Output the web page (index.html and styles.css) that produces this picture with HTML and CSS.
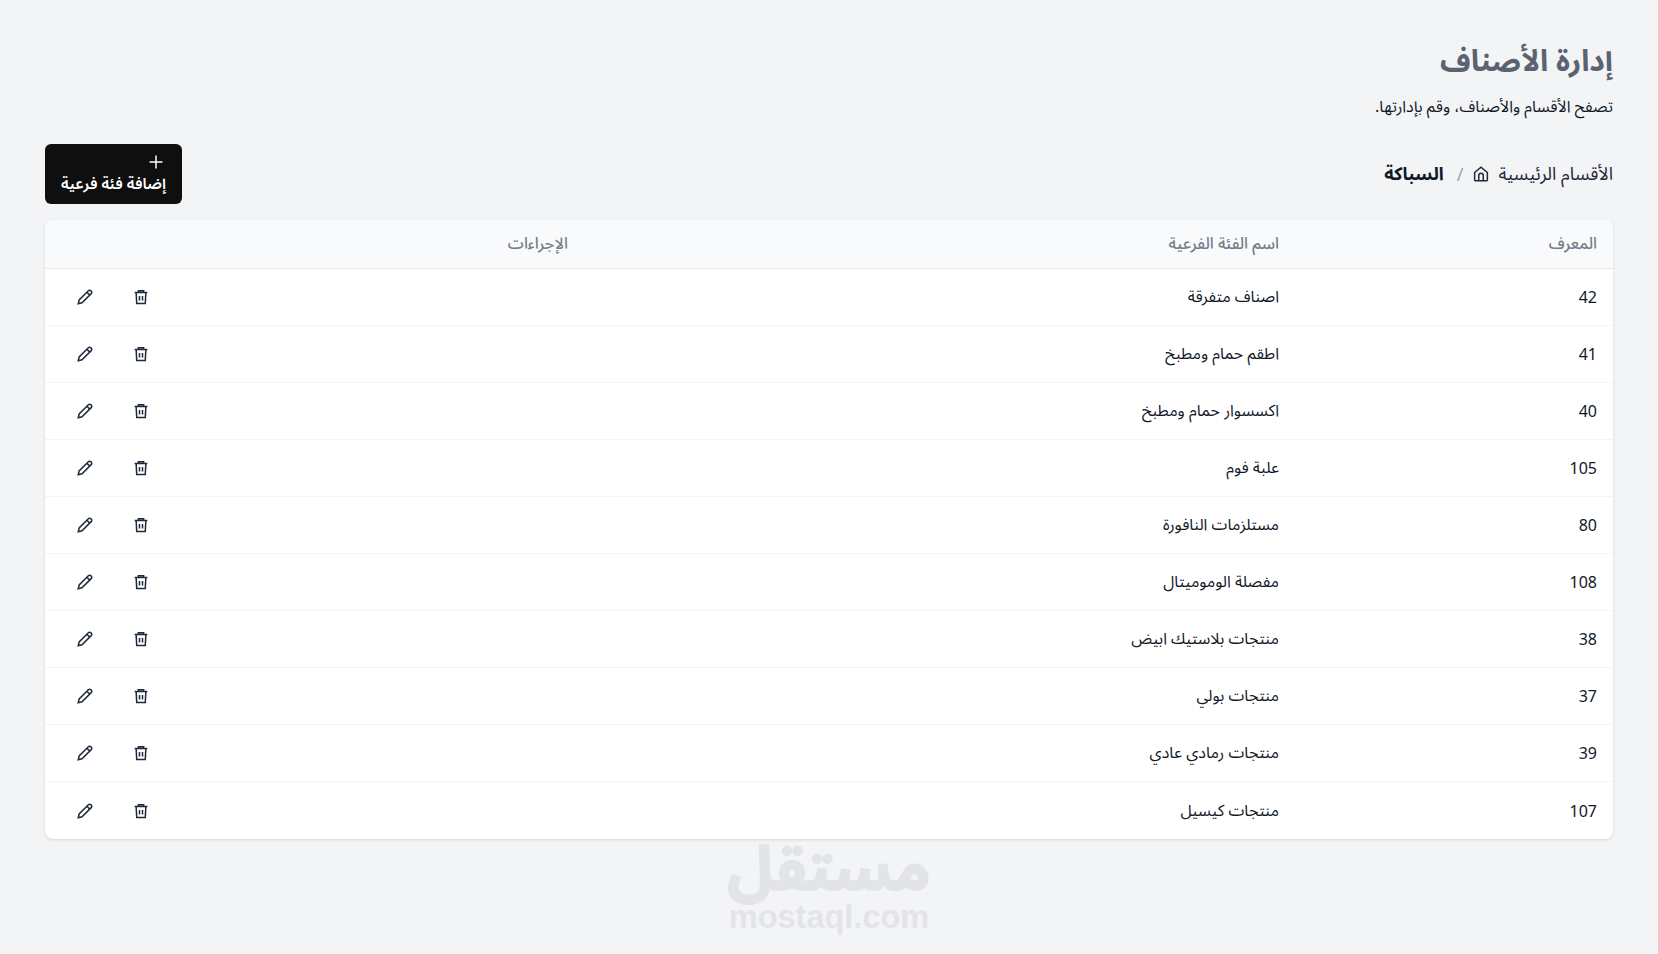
FILE: index.html
```html
<!DOCTYPE html>
<html lang="ar" dir="rtl">
<head>
<meta charset="utf-8">
<title>إدارة الأصناف</title>
<link rel="stylesheet" href="styles.css">
</head>
<body>
<main class="page">
  <header class="head">
    <h1 class="title">إدارة الأصناف</h1>
    <p class="sub">تصفح الأقسام والأصناف، وقم بإدارتها.</p>
  </header>
  <div class="bar">
    <nav class="crumbs">
      <span class="crumb">الأقسام الرئيسية</span>
      <svg class="home" viewBox="0 0 24 24"><path d="M3.500 10 12 3l8.500 7v9.500a1.500 1.500 0 0 1-1.500 1.500H5a1.500 1.500 0 0 1-1.500-1.500z"/><path d="M9 21v-7a3 3 0 0 1 6 0v7"/></svg>
      <span class="sep">/</span>
      <strong class="current">السباكة</strong>
    </nav>
    <button class="add">
      <svg class="plus" viewBox="0 0 16 16"><path d="M8 1.500v13M1.500 8h13"/></svg>
      <span class="add-label">إضافة فئة فرعية</span>
    </button>
  </div>
  <section class="card">
    <table class="table">
      <thead>
        <tr><th class="c-id">المعرف</th><th class="c-name">اسم الفئة الفرعية</th><th class="c-act">الإجراءات</th></tr>
      </thead>
      <tbody>
        <tr><td>42</td><td>اصناف متفرقة</td><td><div class="acts"><svg class="ico" viewBox="0 0 24 24"><use href="#trash"/></svg><svg class="ico" viewBox="0 0 24 24"><use href="#pencil"/></svg></div></td></tr>
        <tr><td>41</td><td>اطقم حمام ومطبخ</td><td><div class="acts"><svg class="ico" viewBox="0 0 24 24"><use href="#trash"/></svg><svg class="ico" viewBox="0 0 24 24"><use href="#pencil"/></svg></div></td></tr>
        <tr><td>40</td><td>اكسسوار حمام ومطبخ</td><td><div class="acts"><svg class="ico" viewBox="0 0 24 24"><use href="#trash"/></svg><svg class="ico" viewBox="0 0 24 24"><use href="#pencil"/></svg></div></td></tr>
        <tr><td>105</td><td>علبة فوم</td><td><div class="acts"><svg class="ico" viewBox="0 0 24 24"><use href="#trash"/></svg><svg class="ico" viewBox="0 0 24 24"><use href="#pencil"/></svg></div></td></tr>
        <tr><td>80</td><td>مستلزمات النافورة</td><td><div class="acts"><svg class="ico" viewBox="0 0 24 24"><use href="#trash"/></svg><svg class="ico" viewBox="0 0 24 24"><use href="#pencil"/></svg></div></td></tr>
        <tr><td>108</td><td>مفصلة الوموميتال</td><td><div class="acts"><svg class="ico" viewBox="0 0 24 24"><use href="#trash"/></svg><svg class="ico" viewBox="0 0 24 24"><use href="#pencil"/></svg></div></td></tr>
        <tr><td>38</td><td>منتجات بلاستيك ابيض</td><td><div class="acts"><svg class="ico" viewBox="0 0 24 24"><use href="#trash"/></svg><svg class="ico" viewBox="0 0 24 24"><use href="#pencil"/></svg></div></td></tr>
        <tr><td>37</td><td>منتجات بولي</td><td><div class="acts"><svg class="ico" viewBox="0 0 24 24"><use href="#trash"/></svg><svg class="ico" viewBox="0 0 24 24"><use href="#pencil"/></svg></div></td></tr>
        <tr><td>39</td><td>منتجات رمادي عادي</td><td><div class="acts"><svg class="ico" viewBox="0 0 24 24"><use href="#trash"/></svg><svg class="ico" viewBox="0 0 24 24"><use href="#pencil"/></svg></div></td></tr>
        <tr><td>107</td><td>منتجات كيسيل</td><td><div class="acts"><svg class="ico" viewBox="0 0 24 24"><use href="#trash"/></svg><svg class="ico" viewBox="0 0 24 24"><use href="#pencil"/></svg></div></td></tr>
      </tbody>
    </table>
  </section>
  <div class="mark" dir="ltr">
    <div class="mark-ar" dir="rtl">مستقل</div>
    <div class="mark-en">mostaql.com</div>
  </div>
</main>
<svg class="defs" aria-hidden="true">
  <symbol id="trash" viewBox="0 0 24 24"><path d="M3.500 6h17M8.500 6V3.500h7V6M5.500 6l.8 14.500h11.400L18.500 6M10 10.500v6M14 10.500v6"/></symbol>
  <symbol id="pencil" viewBox="0 0 24 24"><path d="M3 21l1.200-5L16.500 3.700a2.300 2.300 0 0 1 3.300 0l.5.5a2.300 2.300 0 0 1 0 3.300L8 19.800zM14.500 5.700l3.800 3.800"/></symbol>
</svg>
</body>
</html>
```
FILE: styles.css
```css
* { box-sizing: border-box; }
html, body { margin: 0; height: 100%; }
body {
  background: #f3f4f6;
  color: #111827;
  font-family: "Noto Sans", "Noto Sans Arabic", sans-serif;
  font-size: 16px;
  overflow: hidden;
}
.page { padding: 32px 45px 0; }
.head { height: 112px; }
.title {
  margin: 0;
  padding-top: 8px;
  color: #5b6270;
  font-size: 30px;
  font-weight: 700;
  line-height: 40px;
}
.sub { margin: 15px 0 0; font-size: 16px; line-height: 23px; color: #111827; }
.bar {
  display: flex;
  justify-content: space-between;
  align-items: center;
  height: 60px;
  margin-bottom: 16px;
}
.crumbs { display: flex; align-items: center; gap: 9px; font-size: 18px; }
.crumb { color: #1f2937; }
.home { width: 18px; height: 18px; margin-right: -1px; fill: none; stroke: #1f2937; stroke-width: 2; }
.sep { color: #9ca3af; margin-left: 4px; }
.current { font-weight: 700; color: #111827; }
.add {
  display: flex;
  flex-direction: column;
  align-items: flex-start;
  width: 137px;
  height: 60px;
  padding: 10px 16px 0;
  background: #0f0f10;
  color: #fff;
  border: 0;
  border-radius: 6px;
  font-family: "Noto Sans", "Noto Sans Arabic", sans-serif;
  font-size: 15.500px;
  font-weight: 600;
  line-height: 26px;
}
.add-label { white-space: nowrap; }
.plus { width: 16px; height: 16px; margin-right: 2px; fill: none; stroke: #fff; stroke-width: 1.500; }
.card {
  background: #fff;
  border-radius: 8px;
  overflow: hidden;
  box-shadow: 0 1px 3px rgba(0,0,0,.12);
}
.table { width: 100%; border-collapse: separate; border-spacing: 0; table-layout: fixed; }
th {
  height: 49px;
  padding: 0 16px;
  text-align: right;
  font-size: 16px;
  font-weight: 500;
  color: #757c89;
  background: #f9fafb;
  border-bottom: 1px solid #e5e7eb;
}
.c-id { width: 318px; }
.c-name { width: 711px; }
td {
  height: 57px;
  padding: 0 16px;
  font-size: 16px;
  color: #111827;
  border-bottom: 1px solid #f3f4f6;
}
tr:last-child td { border-bottom: 0; }
.acts { display: flex; justify-content: flex-end; gap: 38px; padding-left: 15px; }
.ico { width: 18px; height: 18px; fill: none; stroke: #1e293b; stroke-width: 2; }
.defs { display: none; }
.mark { margin-top: 2px; text-align: center; color: #e3e4e7; font-family: "Liberation Sans", sans-serif; font-weight: 700; }
.mark-ar { font-size: 61px; line-height: 60px; font-family: "Noto Sans Arabic", sans-serif; -webkit-text-stroke: 2px #e3e4e7; }
.mark-en { font-size: 32.500px; line-height: 32px; }
```
